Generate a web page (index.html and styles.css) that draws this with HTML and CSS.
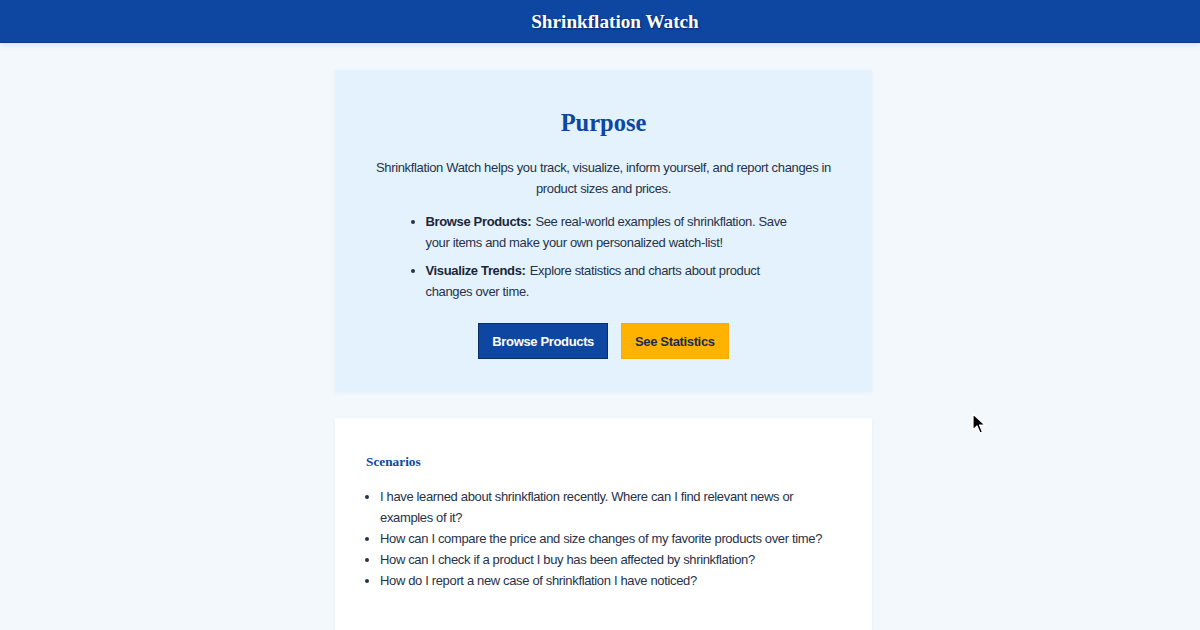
FILE: index.html
```html
<!DOCTYPE html>
<html lang="en">
<head>
<meta charset="utf-8">
<title>Shrinkflation Watch</title>
<link rel="stylesheet" href="styles.css">
</head>
<body>
<header class="topbar">
  <h1 class="brand">Shrinkflation Watch</h1>
</header>
<main class="main">
  <section class="card purpose">
    <h2 class="purpose-title">Purpose</h2>
    <p class="purpose-text">Shrinkflation Watch helps you track, visualize, inform yourself, and report changes in product sizes and prices.</p>
    <ul class="features">
      <li><strong>Browse Products:</strong> See real-world examples of shrinkflation. Save your items and make your own personalized watch-list!</li>
      <li><strong>Visualize Trends:</strong> Explore statistics and charts about product changes over time.</li>
    </ul>
    <div class="actions">
      <button class="btn btn-primary">Browse Products</button>
      <button class="btn btn-accent">See Statistics</button>
    </div>
  </section>
  <section class="card scenarios">
    <h5 class="scenarios-title">Scenarios</h5>
    <ul class="scenario-list">
      <li>I have learned about shrinkflation recently. Where can I find relevant news or examples of it?</li>
      <li>How can I compare the price and size changes of my favorite products over time?</li>
      <li>How can I check if a product I buy has been affected by shrinkflation?</li>
      <li>How do I report a new case of shrinkflation I have noticed?</li>
    </ul>
  </section>
</main>
<svg class="cursor" width="14" height="22" viewBox="0 0 14 22">
  <path d="M1 1 L1 17 L5 13 L8 20 L10.5 19 L7.5 12 L13 12 Z" fill="#000" stroke="#fff" stroke-width="1.2" stroke-linejoin="round"/>
</svg>
</body>
</html>
```
FILE: styles.css
```css
html, body {
  margin: 0;
  padding: 0;
}
body {
  background: #f3f8fd;
  font-family: "Liberation Sans", Arial, sans-serif;
  font-size: 13px;
  letter-spacing: -0.35px;
  color: #27324a;
  height: 630px;
  overflow: hidden;
  position: relative;
}
.topbar {
  height: 43px;
  background: #0d47a1;
  border-bottom: 1px solid #0a3b88;
  box-sizing: border-box;
  display: flex;
  align-items: center;
  justify-content: center;
  padding-top: 1px;
  box-shadow: 0 2px 6px rgba(13, 71, 161, 0.12);
}
.brand {
  margin: 0;
  font-family: "Liberation Serif", "Times New Roman", serif;
  font-weight: bold;
  font-size: 19.2px;
  letter-spacing: 0;
  color: #fff;
  padding-left: 30px;
  text-shadow: 1px 1px 2px rgba(0, 0, 40, 0.5);
}
.main {
  padding: 27px 0 0 7px;
  display: flex;
  flex-direction: column;
  align-items: center;
  gap: 26px;
}
.card {
  width: 537px;
  box-sizing: border-box;
  box-shadow: 0 1px 4px rgba(30, 80, 150, 0.06);
}
.purpose {
  background: #e3f2fd;
  padding: 39px 30px 33px;
  text-align: center;
}
.purpose-title {
  margin: 0 0 20px;
  font-family: "Liberation Serif", "Times New Roman", serif;
  font-weight: bold;
  font-size: 24.5px;
  letter-spacing: 0;
  line-height: 28px;
  color: #0d47a1;
}
.purpose-text {
  margin: 0 0 12px;
  line-height: 21px;
}
.features {
  width: 400px;
  box-sizing: border-box;
  margin: 0 auto 21px;
  padding-left: 22px;
  text-align: left;
  line-height: 21px;
}
.features li + li {
  margin-top: 7px;
}
.features strong {
  color: #1c2638;
  margin-right: 1px;
}
.actions {
  display: flex;
  justify-content: center;
  gap: 13px;
}
.btn {
  height: 36px;
  padding: 0 13px;
  font-family: "Liberation Sans", Arial, sans-serif;
  font-weight: bold;
  font-size: 13px;
  letter-spacing: -0.35px;
  border: 1px solid transparent;
  border-radius: 0;
}
.btn-primary {
  background: #0d47a1;
  border-color: #0a2e6a;
  color: #fff;
}
.btn-accent {
  background: #ffb300;
  border-color: #f6ad00;
  color: #1d2b4a;
}
.scenarios {
  background: #fff;
  padding: 36px 31px 40px;
  height: 230px;
}
.scenarios-title {
  margin: 0 0 16px;
  font-family: "Liberation Serif", "Times New Roman", serif;
  font-weight: bold;
  font-size: 13.3px;
  letter-spacing: 0;
  line-height: 16px;
  color: #0d47a1;
}
.scenario-list {
  margin: 0;
  padding-left: 14px;
  line-height: 21px;
}
.cursor {
  position: absolute;
  left: 972px;
  top: 413px;
}
```
